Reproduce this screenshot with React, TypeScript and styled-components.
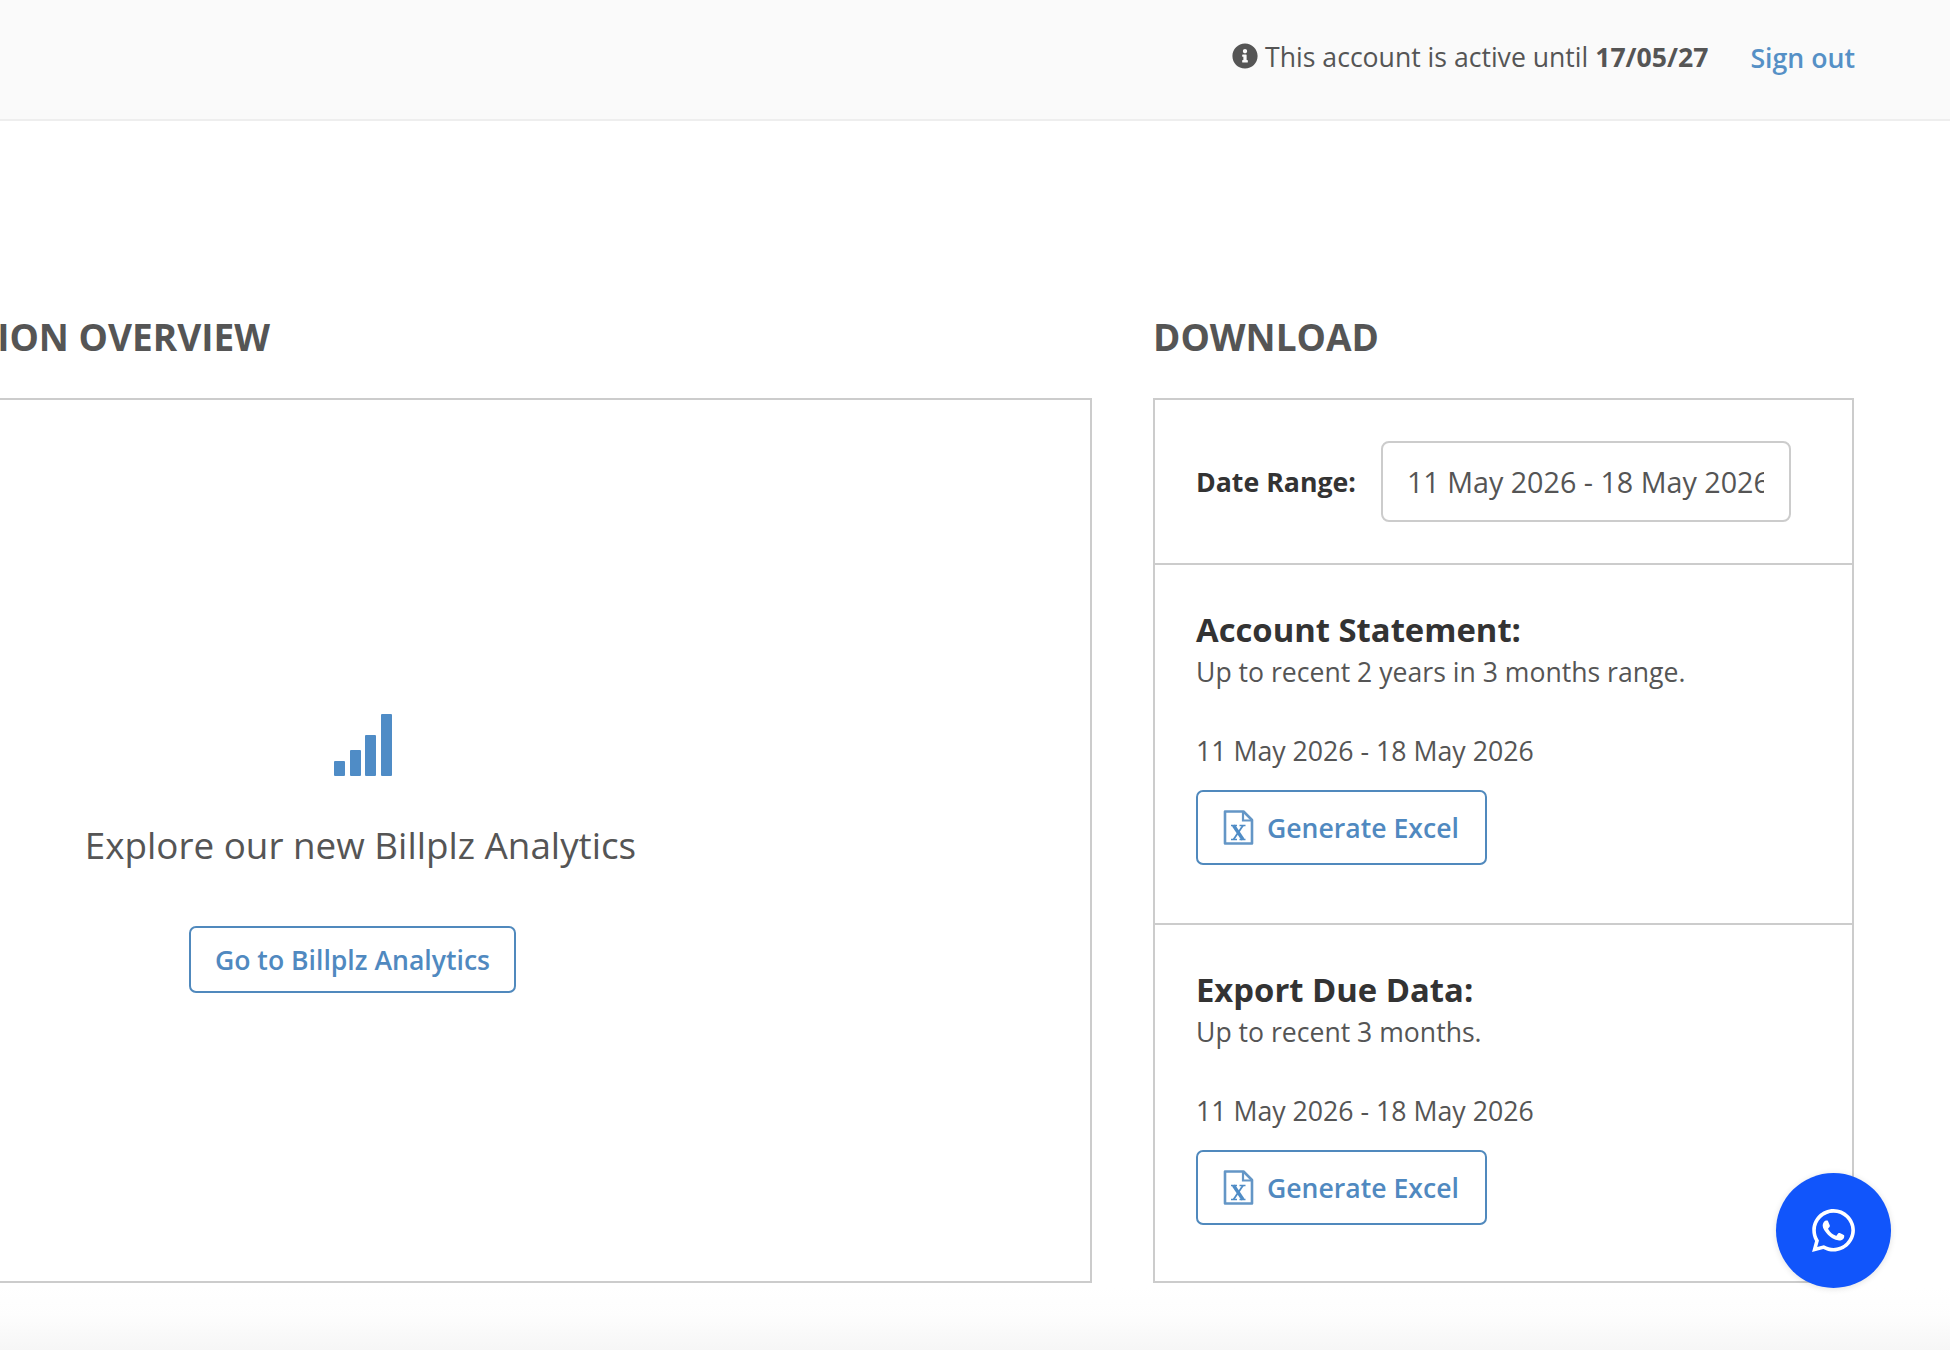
import styled, { createGlobalStyle } from "styled-components";
import { FaInfoCircle, FaWhatsapp } from "react-icons/fa";

const GlobalStyle = createGlobalStyle`
  html, body {
    margin: 0;
    padding: 0;
    background: #fff;
    overflow: hidden;
  }
  body {
    font-family: "Open Sans", "Noto Sans", sans-serif;
    color: #555;
  }
  * {
    box-sizing: border-box;
  }
`;

const Page = styled.div`
  position: relative;
  width: 1950px;
  height: 1350px;
  overflow: hidden;
  display: flex;
  flex-direction: column;
`;
const TopBar = styled.header`
  height: 121px;
  flex: none;
  background-color: #fafafa;
  border-bottom: 2px solid #eeeeee;
  display: flex;
  align-items: center;
  justify-content: flex-end;
  padding: 0 95px 5px 0;
  font-size: 26.6px;
`;
const AccountNote = styled.div`
  display: flex;
  align-items: center;
  gap: 7px;
  color: #555;
  margin-right: 42px;
  svg {
    font-size: 26px;
    margin-bottom: 3px;
  }
  b {
    font-weight: 700;
  }
`;
const SignOut = styled.a`
  color: #5590c6;
  font-weight: 600;
  font-size: 26.7px;
`;
const Content = styled.main`
  flex: none;
  display: grid;
  grid-template-columns: 1463px 701px;
  gap: 61px;
  margin-left: -371px;
  padding-top: 195px;
`;
const Column = styled.section`
  display: flex;
  flex-direction: column;
`;
const SectionTitle = styled.h2<{ $alignRight?: boolean }>`
  margin: 0 0 40px;
  font-size: 37px;
  line-height: 42px;
  font-weight: 700;
  color: #555;
  white-space: nowrap;
  text-align: ${(props) => (props.$alignRight ? "right" : "left")};
  padding-right: ${(props) => (props.$alignRight ? "822px" : "0")};
`;
const Panel = styled.div`
  border: 2px solid #cccccc;
  height: 885px;
  display: flex;
  flex-direction: column;
`;
const OverviewPanel = styled(Panel)`
  align-items: center;
  padding-top: 314px;
`;
const BarsIcon = styled.svg`
  width: 58px;
  height: 62px;
  margin-left: 5px;
  color: #4f8cc6;
`;
const ExploreText = styled.p`
  margin: 45px 0 0;
  font-size: 36.8px;
  line-height: 48px;
  color: #555;
`;
const AnalyticsButton = styled.a`
  margin: 57px 16px 0 0;
  width: 327px;
  height: 67px;
  display: flex;
  align-items: center;
  justify-content: center;
  border: 2px solid #5089bd;
  border-radius: 7px;
  color: #5089c0;
  font-size: 26.6px;
  font-weight: 600;
`;
const DateRow = styled.div`
  height: 165px;
  flex: none;
  display: flex;
  align-items: center;
  padding-left: 41px;
  gap: 25px;
  border-bottom: 2px solid #cccccc;
`;
const DateLabel = styled.label`
  font-size: 26.7px;
  font-weight: 700;
  color: #333;
`;
const DateInput = styled.input`
  width: 410px;
  height: 81px;
  border: 2px solid #cccccc;
  border-radius: 8px;
  padding: 0 25px 0 24px;
  font-family: inherit;
  font-size: 28.7px;
  color: #555;
  background: #fff;
  outline: none;
`;
const ExportBlock = styled.div<{ $divider?: boolean }>`
  padding: 45px 41px 0;
  height: ${(props) => (props.$divider ? "360px" : "auto")};
  border-bottom: ${(props) => (props.$divider ? "2px solid #cccccc" : "none")};
`;
const BlockTitle = styled.h3`
  margin: 0;
  font-size: 32.8px;
  line-height: 40px;
  font-weight: 700;
  color: #333;
`;
const BlockNote = styled.p`
  margin: 5px 0 0;
  font-size: 26.6px;
  line-height: 34px;
  color: #555;
`;
const BlockDate = styled.p`
  margin: 45px 0 0;
  font-size: 26.7px;
  line-height: 34px;
  color: #555;
`;
const ExcelButton = styled.a`
  margin-top: 22px;
  width: 291px;
  height: 75px;
  display: flex;
  align-items: center;
  padding-left: 25px;
  gap: 13px;
  border: 2px solid #5089bd;
  border-radius: 7px;
  color: #5089c0;
  font-size: 26.6px;
  font-weight: 600;
`;
const ExcelGlyph = styled.svg`
  width: 31px;
  height: 35px;
  flex: none;
`;
const PageFade = styled.div`
  flex: 1;
  margin-top: 4px;
  background: linear-gradient(to bottom, #ffffff 0%, #fdfdfd 45%, #f6f6f6 100%);
`;
const ChatBubble = styled.button`
  position: absolute;
  right: 59px;
  bottom: 62px;
  width: 115px;
  height: 115px;
  border: none;
  border-radius: 50%;
  background-color: #1155fb;
  color: #fff;
  display: flex;
  align-items: center;
  justify-content: center;
  box-shadow: 0 1px 6px rgba(0, 0, 0, 0.12);
  font-size: 49px;
  padding: 0;
`;

function ExcelIcon() {
  return (
    <ExcelGlyph viewBox="0 0 31 35" fill="none">
      <path
        d="M2 1.5h18.5L29 10v23.5H2z"
        stroke="#6496c6"
        strokeWidth="2.6"
        strokeLinejoin="round"
      />
      <path d="M20 2v8.5h8.5" stroke="#6496c6" strokeWidth="2.2" />
      <path d="M10.5 15.5l9.5 14" stroke="#4f8cc6" strokeWidth="3.4" />
      <path d="M20 15.5l-9.5 14" stroke="#4f8cc6" strokeWidth="1.8" />
      <path
        d="M8 15.5h6M16.5 15.5h6M8 29.5h6M16.5 29.5h6"
        stroke="#4f8cc6"
        strokeWidth="1.6"
      />
    </ExcelGlyph>
  );
}

function App() {
  const range = "11 May 2026 - 18 May 2026";

  return (
    <Page>
      <GlobalStyle />
      <TopBar>
        <AccountNote>
          <FaInfoCircle />
          <span>
            This account is active until <b>17/05/27</b>
          </span>
        </AccountNote>
        <SignOut>Sign out</SignOut>
      </TopBar>
      <Content>
        <Column>
          <SectionTitle $alignRight>TRANSACTION OVERVIEW</SectionTitle>
          <OverviewPanel>
            <BarsIcon viewBox="0 0 58 62" fill="currentColor">
              <rect x="0" y="47" width="11" height="15" rx="1" />
              <rect x="16" y="36" width="11" height="26" rx="1" />
              <rect x="31" y="21" width="11" height="41" rx="1" />
              <rect x="47" y="0" width="11" height="62" rx="1" />
            </BarsIcon>
            <ExploreText>Explore our new Billplz Analytics</ExploreText>
            <AnalyticsButton>Go to Billplz Analytics</AnalyticsButton>
          </OverviewPanel>
        </Column>
        <Column>
          <SectionTitle>DOWNLOAD</SectionTitle>
          <Panel>
            <DateRow>
              <DateLabel>Date Range:</DateLabel>
              <DateInput readOnly value={range} />
            </DateRow>
            <ExportBlock $divider>
              <BlockTitle>Account Statement:</BlockTitle>
              <BlockNote>Up to recent 2 years in 3 months range.</BlockNote>
              <BlockDate>{range}</BlockDate>
              <ExcelButton>
                <ExcelIcon />
                Generate Excel
              </ExcelButton>
            </ExportBlock>
            <ExportBlock>
              <BlockTitle>Export Due Data:</BlockTitle>
              <BlockNote>Up to recent 3 months.</BlockNote>
              <BlockDate>{range}</BlockDate>
              <ExcelButton>
                <ExcelIcon />
                Generate Excel
              </ExcelButton>
            </ExportBlock>
          </Panel>
        </Column>
      </Content>
      <PageFade />
      <ChatBubble>
        <FaWhatsapp />
      </ChatBubble>
    </Page>
  );
}

export default App;
